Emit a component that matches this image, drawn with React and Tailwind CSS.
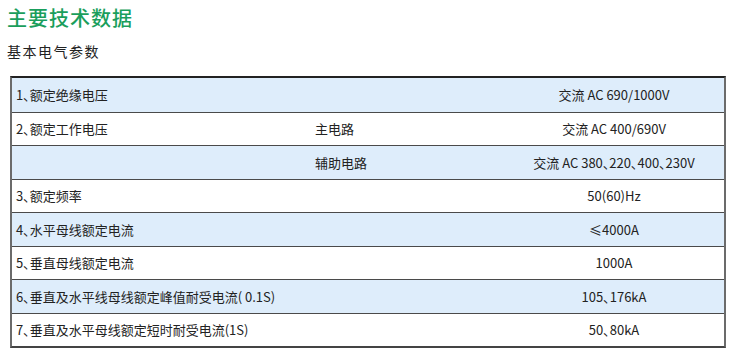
const rows = [
  { label: '1、额定绝缘电压', sub: '', value: '交流 AC 690/1000V', blue: true },
  { label: '2、额定工作电压', sub: '主电路', value: '交流 AC 400/690V', blue: false },
  { label: '', sub: '辅助电路', value: '交流 AC 380、220、400、230V', blue: true },
  { label: '3、额定频率', sub: '', value: '50(60)Hz', blue: false },
  { label: '4、水平母线额定电流', sub: '', value: '≤4000A', blue: true },
  { label: '5、垂直母线额定电流', sub: '', value: '1000A', blue: false },
  { label: '6、垂直及水平线母线额定峰值耐受电流( 0.1S)', sub: '', value: '105、176kA', blue: true },
  { label: '7、垂直及水平母线额定短时耐受电流(1S)', sub: '', value: '50、80kA', blue: false },
];

const App = () => {
  return (
    <div className="w-[740px] h-[362px] bg-white overflow-hidden font-['Noto_Sans_CJK_SC',sans-serif] text-[#222]">
      <div className="pl-[7px] pt-[5px]">
        <h1 className="text-[20px] leading-[26px] font-medium tracking-[1px] text-[#1a9e5c]">主要技术数据</h1>
        <p className="mt-[10px] text-[14px] leading-[20px] tracking-[1.5px] text-[#222]">基本电气参数</p>
      </div>

      {/* Table */}
      <div className="mt-[15px] ml-[10px] w-[716px] border-t-2 border-t-[#222] border-x-2 border-x-[#6b6b6b] border-b-2 border-b-[#444] [font-feature-settings:'palt']">
        {rows.map((row, i) => (
          <div
            key={i}
            className={`grid grid-cols-[300px_192px_1fr] items-center h-[33.5px] text-[13px] ${
              i > 0 ? 'border-t-[1.5px] border-t-[#4a4a4a]' : ''
            } ${row.blue ? 'bg-[#deedfb]' : 'bg-white'}`}
          >
            <div className="pl-[4px] whitespace-nowrap">{row.label}</div>
            <div className="pl-[3px] whitespace-nowrap">{row.sub}</div>
            <div className="text-center whitespace-nowrap">{row.value}</div>
          </div>
        ))}
      </div>
    </div>
  );
};

export default App;
